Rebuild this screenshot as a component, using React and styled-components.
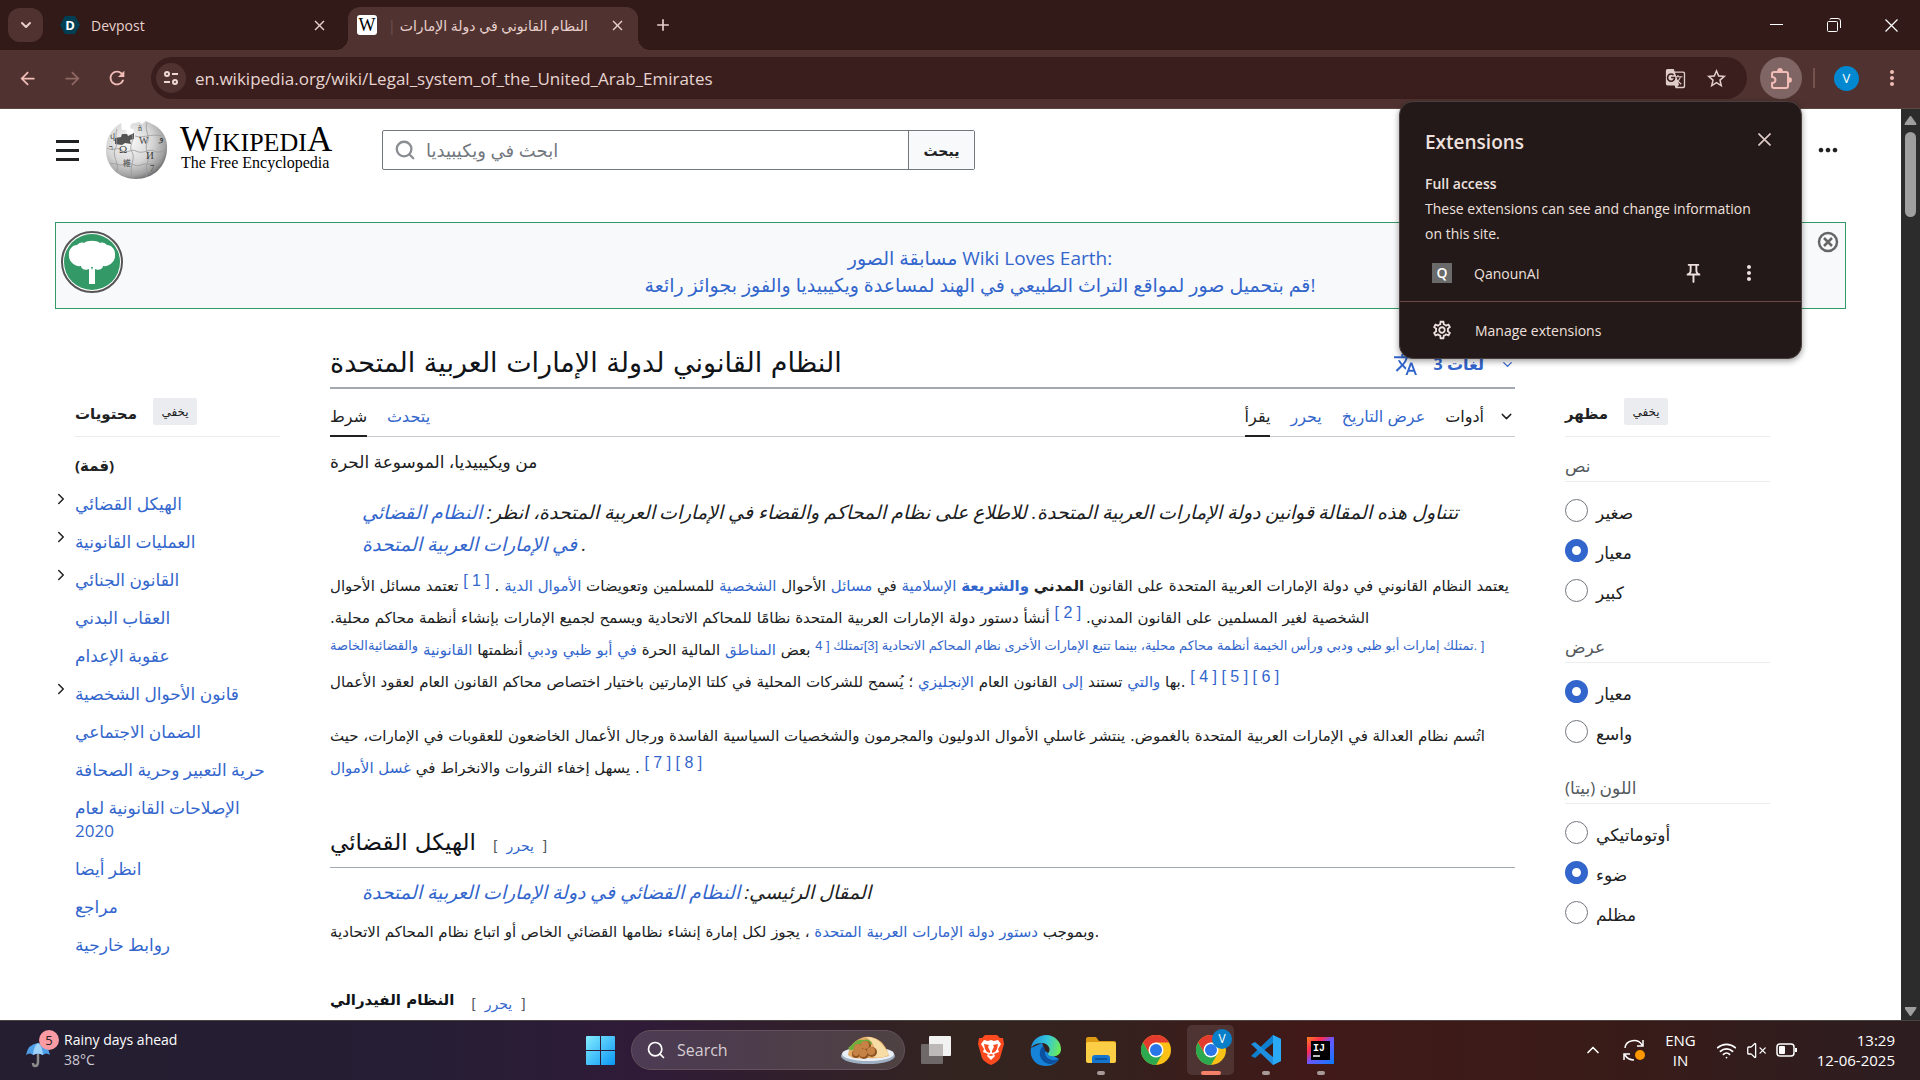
import React, { useState } from 'react';
import styled, { createGlobalStyle, css } from 'styled-components';
import {
  MdArrowBack,
  MdArrowForward,
  MdRefresh,
  MdStarBorder,
  MdGTranslate,
  MdMoreVert,
  MdMoreHoriz,
  MdOutlinePushPin,
  MdOutlineSettings,
  MdTranslate,
  MdClose,
  MdAdd,
} from 'react-icons/md';
import { ChevronDown, ChevronRight, ChevronUp, Search, VolumeX, Wifi } from 'lucide-react';

const ui = '"Open Sans", "DejaVu Sans", sans-serif';
const article = '"DejaVu Sans", "Liberation Sans", sans-serif';
const serif = '"Liberation Serif", "DejaVu Serif", serif';

const GlobalStyle = createGlobalStyle`
  * {
    box-sizing: border-box;
  }

  body {
    margin: 0;
    overflow: hidden;
    font-family: ${ui};
    font-size: 15px;
    color: #202122;
  }

  button {
    font: inherit;
    color: inherit;
    padding: 0;
    border: none;
    background: none;
  }

  a {
    color: #3366cc;
    text-decoration: none;
  }
`;

const Screen = styled.div`
  height: 100vh;
  display: flex;
  flex-direction: column;
  background-color: #fff;
`;

/* ---------- browser ---------- */

const TabStrip = styled.div`
  height: 50px;
  flex-shrink: 0;
  display: flex;
  align-items: center;
  padding: 0 12px 0 8px;
  background-color: #311a18;
  color: #e7cfcb;
`;

const TabSearchButton = styled.button`
  width: 35px;
  height: 34px;
  display: flex;
  align-items: center;
  justify-content: center;
  border-radius: 12px;
  background-color: #503331;
`;

const Tab = styled.div`
  position: relative;
  width: 290px;
  height: 43px;
  align-self: flex-end;
  display: flex;
  align-items: center;
  gap: 11px;
  margin-right: 15px;
  padding: 0 11px 7px 9px;
  border-radius: 12px 12px 0 0;
  font-size: 14px;
  white-space: nowrap;

  ${({ $active }) =>
    $active
      ? css`
          background-color: #503331;

          &::before,
          &::after {
            content: '';
            position: absolute;
            bottom: 0;
            width: 12px;
            height: 12px;
          }

          &::before {
            right: 100%;
            background: radial-gradient(circle at 0 0, transparent 12px, #503331 12px);
          }

          &::after {
            left: 100%;
            background: radial-gradient(circle at 100% 0, transparent 12px, #503331 12px);
          }
        `
      : css`
          padding-left: 17px;
          padding-right: 4px;
        `}
`;

const TabTitle = styled.span`
  flex: 1;
`;

const TitleBar = styled.span`
  margin-right: 4px;
  opacity: 0.2;
`;

const IconButton = styled.button`
  width: ${({ $size = 20 }) => $size}px;
  height: ${({ $size = 20 }) => $size}px;
  flex-shrink: 0;
  display: flex;
  align-items: center;
  justify-content: center;
  border-radius: 50%;
  background-color: ${({ $bg = 'transparent' }) => $bg};
  color: ${({ $color = 'inherit' }) => $color};
`;

const WikiFavicon = styled.span`
  width: 20px;
  height: 20px;
  flex-shrink: 0;
  display: flex;
  align-items: center;
  justify-content: center;
  border-radius: 3px;
  background-color: #fff;
  color: #000;
  font-family: ${serif};
  font-size: 18px;
`;

const WindowControls = styled.div`
  display: flex;
  gap: 37px;
  margin-left: auto;
  padding-right: 7px;
  color: #fff;
`;

const Toolbar = styled.div`
  position: relative;
  height: 59px;
  flex-shrink: 0;
  display: flex;
  align-items: center;
  gap: 13px;
  padding: 0 12px 2px 11px;
  background-color: #503331;
  border-bottom: 1px solid #5e4643;
  color: #f2bdb6;
`;

const NavGroup = styled.div`
  display: flex;
  gap: 13px;
  margin-right: 5px;
`;

const Omnibox = styled.div`
  flex: 1;
  height: 42px;
  display: flex;
  align-items: center;
  gap: 9px;
  padding: 0 15px 0 5px;
  border-radius: 21px;
  background-color: #3a1e1d;
  color: #e0ccc9;
`;

const UrlInput = styled.input`
  flex: 1;
  min-width: 0;
  padding: 0;
  border: none;
  outline: none;
  background: none;
  color: #e6d4d1;
  font-family: ${ui};
  font-size: 17px;
`;

const ToolbarDivider = styled.span`
  width: 2px;
  height: 20px;
  margin: 0 6px 0 -2px;
  background-color: #74514d;
`;

const Avatar = styled.button`
  width: 25px;
  height: 25px;
  margin-right: 4px;
  border-radius: 50%;
  background-color: #0288d1;
  color: #fff;
  font-size: 13px;
`;

/* ---------- extensions popup ---------- */

const Popup = styled.section`
  position: absolute;
  top: 51px;
  right: 118px;
  z-index: 10;
  width: 403px;
  border: 1px solid #4a3f3e;
  border-radius: 14px;
  background-color: #231918;
  box-shadow: 0 2px 6px rgba(0, 0, 0, 0.4);
  color: #eee0de;
`;

const PopupBody = styled.div`
  padding: 25px 25px 13px;
  line-height: 25px;
`;

const PopupTitle = styled.h2`
  display: flex;
  align-items: flex-start;
  justify-content: space-between;
  margin: 0 0 14px;
  font-size: 19px;
  line-height: 30px;
  font-weight: 600;
`;

const PopupHeading = styled.h3`
  margin: 0;
  font-size: 14px;
  font-weight: 600;
`;

const PopupText = styled.p`
  margin: 0 0 12px;
  font-size: 14px;
`;

const PopupRow = styled.div`
  display: flex;
  align-items: center;
  gap: 22px;
  height: ${({ $height = 30 }) => $height}px;
  padding: ${({ $inset = 7 }) => `0 5px 0 ${$inset}px`};
  font-size: 14px;

  > span:nth-of-type(1) {
    flex: 1;
  }
`;

const PopupFooter = styled.div`
  border-top: 1px solid #6b4a46;
`;

const LetterIcon = styled.i`
  width: 20px;
  height: 20px;
  background-color: #6a6a6a;
  color: #fff;
  font-style: normal;
  font-weight: 600;
  font-size: 14px;
  line-height: 20px;
  text-align: center;
`;

/* ---------- page ---------- */

const Viewport = styled.div`
  flex: 1;
  min-height: 0;
  display: flex;
`;

const Page = styled.div`
  flex: 1;
  min-width: 0;
  overflow: hidden;
  padding: 0 55px;
`;

const Scrollbar = styled.div`
  width: 19px;
  display: flex;
  flex-direction: column;
  align-items: center;
  justify-content: space-between;
  padding: 6px 0 3px;
  background-color: #2c2c2c;
`;

const Thumb = styled.div`
  width: 11px;
  height: 85px;
  margin: 6px 0 auto;
  border-radius: 6px;
  background-color: #9f9f9f;
`;

const SiteHeader = styled.header`
  height: 113px;
  display: flex;
  align-items: flex-start;
  padding: 12px 4px 0 1px;
`;

const MenuButton = styled.button`
  width: 23px;
  height: 59px;
  display: flex;
  flex-direction: column;
  justify-content: center;
  gap: 6px;
  margin-right: 26px;

  span {
    height: 3px;
    background-color: #202122;
  }
`;

const Brand = styled.a`
  display: flex;
  gap: 12px;
  width: 277px;
  color: #000;
  font-family: ${serif};
`;

const Wordmark = styled.span`
  display: block;
  height: 31px;
  font-size: 26px;
  line-height: 38px;

  b {
    font-size: 35px;
    font-weight: 400;
  }
`;

const Tagline = styled.span`
  display: block;
  padding-left: 1px;
  font-size: 16px;
  line-height: 22px;
`;

const SearchForm = styled.form`
  width: 593px;
  height: 40px;
  display: flex;
  margin-top: 9px;
  border: 1px solid #72777d;
  border-radius: 2px;
`;

const SearchField = styled.label`
  flex: 1;
  display: flex;
  align-items: center;
  gap: 8px;
  padding-left: 11px;
  color: #8a8d91;

  input {
    flex: 1;
    min-width: 0;
    height: 36px;
    border: none;
    outline: none;
    font-family: ${ui};
    font-size: 18px;
  }

  input::placeholder {
    color: #72777d;
  }
`;

const SearchButton = styled.button`
  width: 66px;
  border-left: 1px solid #72777d;
  background-color: #f8f9fa;
  font-size: 14px;
  font-weight: 700;
`;

const MoreButton = styled(IconButton)`
  margin: 15px 0 0 auto;
`;

const Banner = styled.aside`
  height: 87px;
  display: flex;
  align-items: flex-start;
  padding: 8px 6px 0 5px;
  border: 1px solid #339966;
  background-color: #f8f9fb;
  color: #666;
`;

const BannerLink = styled.a`
  flex: 1;
  display: flex;
  flex-direction: column;
  align-items: center;
  padding: 14px 0 0 20px;
  font-size: 19px;
  line-height: 27px;
`;

const Columns = styled.div`
  display: grid;
  grid-template-columns: 225px minmax(0, 1fr) 205px;
  column-gap: 50px;
  padding-right: 76px;
`;

const SideHead = styled.div`
  height: 42px;
  display: flex;
  align-items: flex-start;
  gap: 16px;
  border-bottom: 1px solid #eaecf0;

  h2 {
    margin: 0;
    padding-top: 5px;
    font-size: 15px;
    font-weight: 700;
    line-height: 26px;
  }

  button {
    width: 44px;
    height: 27px;
    margin-top: 3px;
    border-radius: 2px;
    background-color: #eaecf0;
    font-size: 12px;
  }
`;

const Contents = styled.nav`
  margin-top: 86px;
  padding-left: 20px;
`;

const ContentsList = styled.ul`
  margin: 17px 0 0;
  padding: 0;
  list-style: none;
  line-height: 23px;
`;

const ContentsItem = styled.li`
  position: relative;
  margin-bottom: 15px;
  font-size: ${({ $bold }) => ($bold ? 15 : 17)}px;
  font-weight: ${({ $bold }) => ($bold ? 700 : 400)};

  a {
    display: block;
    color: ${({ $bold }) => ($bold ? '#202122' : '#3366cc')};
  }

  button {
    position: absolute;
    left: -23px;
    top: -2px;
    height: 18px;
  }
`;

const Year = styled.span`
  display: block;
`;

const Article = styled.main`
  min-width: 0;
`;

const TitleRow = styled.div`
  height: 52px;
  display: flex;
  justify-content: space-between;
  align-items: center;
  margin-top: 28px;
  border-bottom: 2px solid #a2a9b1;
`;

const Title = styled.h1`
  margin: 0;
  color: #101418;
  font-family: ${article};
  font-size: 27px;
  font-weight: 400;
  white-space: nowrap;
`;

const Languages = styled.button`
  display: flex;
  align-items: center;
  gap: 16px;
  padding-top: 4px;
  color: #3366cc;
  font-size: 16px;
  font-weight: 700;
`;

const PageTabs = styled.div`
  height: 48px;
  display: flex;
  gap: 20px;
  border-bottom: 1px solid #c8ccd1;
  font-size: 16px;
  line-height: 55px;
`;

const PageTab = styled.a`
  height: 48px;
  color: ${({ $plain }) => ($plain ? '#202122' : '#3366cc')};
  border-bottom: ${({ $selected }) => ($selected ? '2px solid #202122' : 'none')};
`;

const TabSpacer = styled.span`
  flex: 1;
`;

const ToolsButton = styled.button`
  height: 55px;
  display: flex;
  align-items: center;
  gap: 14px;
  line-height: inherit;
`;

const Lines = styled.div`
  display: flex;
  flex-direction: column;
  align-items: flex-start;
  margin-top: ${({ $gap }) => $gap}px;
  padding-left: ${({ $indent = 0 }) => $indent}px;
  font-family: ${({ $ui }) => ($ui ? ui : article)};
  font-size: ${({ $size = 15 }) => $size}px;
  font-style: ${({ $italic }) => ($italic ? 'italic' : 'normal')};
`;

const Line = styled.div.attrs({ dir: 'rtl' })`
  height: 32px;
  line-height: 32px;
  white-space: nowrap;
`;

const Ref = styled.sup`
  font-family: "Liberation Sans", "DejaVu Sans", sans-serif;
  font-size: ${({ $small }) => ($small ? 13 : 16)}px;
  line-height: 0;
  vertical-align: 5px;
`;

const Section = styled.div`
  height: ${({ $height }) => $height}px;
  display: flex;
  align-items: center;
  gap: 17px;
  margin-top: ${({ $gap }) => $gap}px;
  border-bottom: ${({ $rule }) => ($rule ? '1px solid #a2a9b1' : 'none')};
  font-family: ${article};

  h2,
  h3 {
    margin: 0;
    color: #101418;
    font-size: ${({ $size }) => $size}px;
    font-weight: ${({ $bold }) => ($bold ? 700 : 400)};
  }
`;

const Edit = styled.span`
  padding-top: 8px;
  color: #54595d;
  font-size: 14px;

  a {
    margin: 0 8px;
  }
`;

const Appearance = styled.aside`
  margin-top: 86px;
`;

const AppearanceGroups = styled.div`
  padding-top: 14px;
`;

const Options = styled.fieldset`
  margin: 0 0 22px;
  padding: 0;
  border: none;
  font-size: 17px;

  legend {
    width: 100%;
    height: 31px;
    padding: 0;
    border-bottom: 1px solid #eaecf0;
    color: #54595d;
    line-height: 29px;
  }
`;

const OptionList = styled.div`
  padding-top: 8px;
`;

const Option = styled.label`
  height: 40px;
  display: flex;
  align-items: center;
  gap: 8px;

  input {
    appearance: none;
    width: 23px;
    height: 23px;
    margin: 0;
    border: 1px solid #72777d;
    border-radius: 50%;
    background-color: #fff;
  }

  input:checked {
    border: 7px solid #3366cc;
  }

  span {
    padding-top: 4px;
  }
`;

/* ---------- taskbar ---------- */

const Taskbar = styled.footer`
  height: 60px;
  flex-shrink: 0;
  display: grid;
  grid-template-columns: 1fr auto 1fr;
  align-items: center;
  padding: 0 25px 1px 24px;
  border-top: 1px solid #4b4340;
  background: linear-gradient(90deg, #241e30 0%, #261e34 22%, #2f1b38 33%, #33241f 50%, #35211e 58%, #401918 68%, #3a1b17 82%, #2c1d21 100%);
  color: #fff;
  font-size: 14px;
  line-height: 20px;
`;

const Weather = styled.button`
  display: flex;
  align-items: center;
  gap: 4px;
  justify-self: start;
  text-align: left;

  small {
    display: block;
    color: #cfcbd3;
    font-size: 14px;
  }
`;

const Apps = styled.div`
  display: flex;
  align-items: center;
  margin-left: 14px;
`;

const StartButton = styled(IconButton)`
  margin-right: 16px;
  border-radius: 0;
`;

const TaskSearch = styled.label`
  width: 274px;
  height: 40px;
  display: flex;
  align-items: center;
  gap: 11px;
  margin-right: 3px;
  padding: 0 9px 0 14px;
  border: 1px solid #65505d;
  border-radius: 20px;
  background-color: rgba(255, 255, 255, 0.14);

  input {
    flex: 1;
    min-width: 0;
    padding: 0;
    border: none;
    outline: none;
    background: none;
    font-family: ${ui};
    font-size: 16px;
  }

  input::placeholder {
    color: #d5cdd4;
  }
`;

const AppButton = styled.button`
  position: relative;
  width: 47px;
  height: 50px;
  display: flex;
  align-items: center;
  justify-content: center;
  margin: 0 4px;
  border-radius: 5px;
  background-color: ${({ $active }) => ($active ? 'rgba(255, 255, 255, 0.1)' : 'transparent')};

  &::after {
    content: '';
    position: absolute;
    bottom: 0;
    width: ${({ $active }) => ($active ? 20 : 8)}px;
    height: 4px;
    border-radius: 2px;
    background-color: ${({ $active, $running }) => ($active ? '#f4806a' : $running ? '#a79a98' : 'transparent')};
  }
`;

const AppBadge = styled.span`
  position: absolute;
  top: 4px;
  right: 2px;
  width: 20px;
  height: 20px;
  border-radius: 50%;
  background-color: #0a7fc9;
  font-size: 12px;
`;

const Tray = styled.div`
  display: flex;
  align-items: center;
  justify-self: end;
  gap: 20px;
`;

const TrayText = styled.div`
  font-size: 15px;
  text-align: ${({ $align }) => $align};
`;

const TrayIcons = styled.div`
  display: flex;
  align-items: center;
  gap: 9px;
`;

/* ---------- drawings ---------- */

const Globe = () => (
  <svg width="63" height="58" viewBox="0 0 63 58" aria-hidden="true">
    <defs>
      <radialGradient id="globe" cx="38%" cy="35%" r="70%">
        <stop offset="0" stopColor="#fafafa" />
        <stop offset="0.55" stopColor="#d6d6d6" />
        <stop offset="0.85" stopColor="#a0a0a0" />
        <stop offset="1" stopColor="#666" />
      </radialGradient>
    </defs>
    <path
      d="M13 4 L16 2 L17 9 L21 9 L22 13 L28 13 L29 9 L25 7 L26 3 L34 1 L37 3 L41 0 L49 4 C58 9 63 18 62 29 C61 46 48 58 31 58 C14 58 1 46 1 29 C1 18 5 10 13 4 Z"
      fill="url(#globe)"
    />
    <path d="M10 17 l6 -1 1 -3 5 0 1 2 6 -3 0 6 -4 1 1 4 -6 -1 -3 2 -7 -1 z" fill="#555" />
    <g fill="none" stroke="#999" strokeWidth="0.8">
      <path d="M2 27 C8 31 12 25 16 29 C22 34 26 27 31 30 C38 34 44 27 49 30 C54 33 58 29 62 29" />
      <path d="M5 43 C10 41 14 46 20 43 C26 40 30 47 36 44 C42 41 49 46 57 41" />
      <path d="M12 8 C9 16 14 22 10 28 C7 36 14 40 12 51" />
      <path d="M27 13 C30 20 23 25 27 31 C31 38 24 42 27 57" />
      <path d="M42 2 C39 10 46 15 42 22 C39 29 46 35 42 43 C40 48 43 52 41 56" />
      <path d="M30 15 C38 18 45 12 57 15" />
    </g>
    <g fill="#444" fontFamily="Liberation Serif" fontSize="10">
      <text x="14" y="32" fontSize="11">Ω</text>
      <text x="34" y="23">W</text>
      <text x="41" y="38" fontSize="11">И</text>
      <text x="54" y="20">و</text>
      <text x="33" y="10" fontSize="8">ñ</text>
      <text x="4" y="29" fontSize="8">ר</text>
      <text x="18" y="45" fontFamily="Noto Sans CJK JP" fontSize="8">維</text>
      <text x="45" y="50" fontSize="9">7</text>
      <text x="5" y="18" fontSize="8">վ</text>
    </g>
  </svg>
);

const TreeLogo = () => (
  <svg width="62" height="62" viewBox="0 0 62 62" aria-hidden="true">
    <circle cx="31" cy="31" r="30" fill="#fff" stroke="#555" strokeWidth="2" />
    <circle cx="31" cy="31" r="28" fill="#339966" />
    <path
      d="M28 53 V38 C25 40 20 38 20 35 C14 36 8 31 8 25 C7 18 12 14 16 14 C18 12 20 11 23 12 C26 9 36 9 39 12 C42 11 44 12 46 14 C50 14 55 18 54 25 C54 31 48 36 42 35 C42 38 37 40 34 38 V53 Z"
      fill="#fff"
    />
    <path d="M30 36 h2 l-1 3 z" fill="#339966" />
  </svg>
);

const DevpostIcon = () => (
  <svg width="20" height="20" viewBox="0 0 20 20" aria-hidden="true">
    <path d="M5 1 H15 L20 10 L15 19 H5 L0 10 Z" fill="#003e54" />
    <text x="10" y="15" fill="#fff" fontFamily="Open Sans" fontSize="13" fontWeight="700" textAnchor="middle">D</text>
  </svg>
);

const SiteInfoIcon = () => (
  <svg width="18" height="18" viewBox="0 0 18 18" fill="none" stroke="#eed8d5" strokeWidth="2" aria-hidden="true">
    <circle cx="5" cy="5" r="2" />
    <path d="M10 5 H16 M2 13 H8" />
    <circle cx="13" cy="13" r="2" />
  </svg>
);

const PuzzleIcon = () => (
  <svg width="24" height="24" viewBox="0 0 24 24" aria-hidden="true">
    <path
      d="M5 6 H17 Q19 6 19 8 V20 Q19 22 17 22 H5 Q3 22 3 20 V17 A3.500 3 0 0 0 3 11 V8 Q3 6 5 6 Z"
      fill="none"
      stroke="currentColor"
      strokeWidth="2"
      strokeLinejoin="round"
    />
    <path d="M8 6 A3 4 0 0 1 14 6 Z M19 11 A4 3 0 0 1 19 17 Z" fill="currentColor" />
  </svg>
);

const RestoreIcon = () => (
  <svg width="14" height="14" viewBox="0 0 14 14" fill="none" stroke="#fff" aria-hidden="true">
    <rect x="0.5" y="3.5" width="10" height="10" rx="1" />
    <path d="M3 1.5 Q3 0.5 4 0.5 H11 Q13.500 0.5 13.500 3 V10" />
  </svg>
);

const WindowCloseIcon = ({ size = 13, width = 1.2, color = '#fff' }) => (
  <svg width={size} height={size} viewBox="0 0 13 13" fill="none" stroke={color} strokeWidth={width} aria-hidden="true">
    <path d="M0.500 0.500 L12.500 12.500 M12.500 0.500 L0.500 12.500" />
  </svg>
);

const MinimizeIcon = () => (
  <svg width="14" height="14" viewBox="0 0 14 14" stroke="#fff" aria-hidden="true">
    <path d="M0 6.500 H13" />
  </svg>
);

const CircleClose = () => (
  <svg width="22" height="22" viewBox="0 0 22 22" fill="none" stroke="#666" strokeWidth="2.500" aria-hidden="true">
    <circle cx="11" cy="11" r="9" />
    <path d="M7 7 L15 15 M15 7 L7 15" />
  </svg>
);

const ScrollArrow = ({ down }) => (
  <svg width="13" height="11" viewBox="0 0 13 11" aria-hidden="true">
    <path d={down ? 'M1 1 H12 Q13 1 12 3 L7 10 L6 10 L1 3 Z' : 'M6 1 L7 1 L12 8 Q13 10 12 10 H1 Q0 10 1 8 Z'} fill="#9f9f9f" />
  </svg>
);

const Umbrella = () => (
  <svg width="36" height="44" viewBox="0 0 36 44" aria-hidden="true">
    <path d="M14 24 V34 Q14 38 11 38 Q9 38 9 35" fill="none" stroke="#8b8b8b" strokeWidth="2.500" />
    <path d="M2 27 Q4 16 14 15 Q24 16 26 27 Q22 24 19 27 Q14 24 9 27 Q6 24 2 27 Z" fill="#4f9fe8" />
    <path d="M9 27 Q10 17 14 15 Q18 17 19 27 Q14 24 9 27 Z" fill="#9fd3fa" />
    <circle cx="25" cy="12" r="10" fill="#fb9ba3" />
    <text x="25" y="17" fill="#222" fontFamily="Open Sans" fontSize="13" textAnchor="middle">5</text>
  </svg>
);

const StartIcon = () => (
  <svg width="29" height="29" viewBox="0 0 29 29" aria-hidden="true">
    <defs>
      <linearGradient id="start" x1="0" y1="0" x2="1" y2="1">
        <stop offset="0" stopColor="#84edff" />
        <stop offset="1" stopColor="#0a96f5" />
      </linearGradient>
    </defs>
    <path d="M0 1 Q0 0 1 0 H14 V14 H0 Z M15 0 H28 Q29 0 29 1 V14 H15 Z M0 15 H14 V29 H1 Q0 29 0 28 Z M15 15 H29 V28 Q29 29 28 29 H15 Z" fill="url(#start)" />
  </svg>
);

const FoodIcon = () => (
  <svg width="54" height="28" viewBox="0 0 54 28" aria-hidden="true">
    <ellipse cx="27" cy="20" rx="27" ry="8" fill="#9fb0c2" />
    <ellipse cx="27" cy="18" rx="26" ry="7" fill="#e9eff5" />
    <path d="M7 19 Q9 5 23 1 Q42 -1 48 20 Q38 23 27 22 Q12 24 7 19 Z" fill="#e3ab66" />
    <path d="M25 1 Q39 0 48 19 Q40 23 32 21 Q37 9 25 1 Z" fill="#f8dca6" />
    <path d="M7 12 L12 8 Q16 3 22 4 Q28 2 31 7 Q30 11 24 11 Q18 14 13 13 Q10 16 7 12 Z" fill="#6fae3c" />
    <g fill="#8f5423">
      <circle cx="18" cy="13" r="5" />
      <circle cx="25" cy="10" r="5" />
      <circle cx="31" cy="16" r="5" />
      <circle cx="23" cy="18" r="5" />
      <circle cx="15" cy="18" r="4" />
    </g>
    <g fill="#c68345">
      <circle cx="17" cy="12" r="4" />
      <circle cx="24" cy="9" r="4" />
      <circle cx="30" cy="15" r="4" />
      <circle cx="22" cy="17" r="4" />
      <circle cx="15" cy="17" r="3" />
    </g>
  </svg>
);

const TaskViewIcon = () => (
  <svg width="30" height="28" viewBox="0 0 30 28" aria-hidden="true">
    <rect x="8" y="0" width="22" height="20" rx="1" fill="#f2f2f2" />
    <rect x="0" y="8" width="22" height="20" rx="1" fill="#6e6968" />
    <path d="M8 8 H22 V20 H8 Z" fill="#bdb9b8" />
  </svg>
);

const BraveIcon = () => (
  <svg width="26" height="30" viewBox="0 0 26 30" aria-hidden="true">
    <path d="M7 0 H19 L22 3 L25 3 L26 9 L22 23 Q20 27 13 30 Q6 27 4 23 L0 9 L1 3 L4 3 Z" fill="#fb4a1f" />
    <path d="M6 5 L10 6 L13 5 L16 6 L20 5 L23 9 L20 14 L21 17 L16 19 L17 21 L13 25 L9 21 L10 19 L5 17 L6 14 L3 9 Z" fill="#fff" />
    <path d="M6 9 L11 10 L10 12 L12 16 V18 L9 17 L7 14 Z M20 9 L15 10 L16 12 L14 16 V18 L17 17 L19 14 Z M10 20 L13 19 L16 20 L13 21 Z" fill="#fb4a1f" />
  </svg>
);

const EdgeIcon = () => (
  <svg width="31" height="31" viewBox="0 0 31 31" aria-hidden="true">
    <defs>
      <linearGradient id="edgeTop" x1="0" y1="0.300" x2="1" y2="0.500">
        <stop offset="0" stopColor="#1c8fe0" />
        <stop offset="0.500" stopColor="#34c5dc" />
        <stop offset="1" stopColor="#6cea5a" />
      </linearGradient>
    </defs>
    <path d="M1 13 C-1 23 6 31 16 31 C22 31 27 28 29 24 L15 16 L12 8 Z" fill="#1683d8" />
    <path d="M1 13 C2 5 9 0 16 0 C25 0 31 7 31 14 C31 19 27 22 22 21 C18 21 17 19 19 17 C21 14 18 8 12 8 C6 8 2 11 1 13 Z" fill="url(#edgeTop)" />
    <path d="M12 12 C7 18 11 29 21 29 C24 29 27 27 29 24 C23 27 14 24 15 16 C15 13 13 11 12 12 Z" fill="#0c50a0" />
  </svg>
);

const FolderIcon = () => (
  <svg width="30" height="27" viewBox="0 0 30 27" aria-hidden="true">
    <path d="M0 2 Q0 0 2 0 H10 L13 4 H28 Q30 4 30 6 V12 H0 Z" fill="#dc9a12" />
    <rect y="5" width="30" height="21" rx="2" fill="#fcce46" />
    <path d="M6 26 V21 Q6 18 9 18 H21 Q24 18 24 21 V26 Z" fill="#1475cf" />
    <path d="M9 22 H21" stroke="#0a4a8c" strokeWidth="1.500" />
  </svg>
);

const ChromeIcon = () => (
  <svg width="30" height="30" viewBox="0 0 30 30" aria-hidden="true">
    <circle cx="15" cy="15" r="15" fill="#fbc116" />
    <path d="M2 7.500 A15 15 0 0 1 28 7.500 H15 L8.500 18.750 Z" fill="#e33b2e" />
    <path d="M2 7.500 A15 15 0 0 0 15 30 L21.500 18.750 L8.500 18.750 Z" fill="#2da94f" />
    <circle cx="15" cy="15" r="7.500" fill="#fff" />
    <circle cx="15" cy="15" r="6" fill="#2a75e8" />
  </svg>
);

const VsCodeIcon = () => (
  <svg width="30" height="30" viewBox="0 0 30 30" aria-hidden="true">
    <path d="M22 0 L30 4 V26 L22 30 L22 22 L22 8 L4 23 L0 21 Z" fill="#0f7fd0" />
    <path d="M0 9 L4 7 L22 22 V30 Z" fill="#1f8fe0" />
    <path d="M22 0 L30 4 V26 L22 30 Z" fill="#2aa9f4" />
  </svg>
);

const IntellijIcon = () => (
  <svg width="27" height="27" viewBox="0 0 27 27" aria-hidden="true">
    <defs>
      <linearGradient id="ij" x1="0" y1="0" x2="1" y2="1">
        <stop offset="0" stopColor="#fc801d" />
        <stop offset="0.300" stopColor="#fe2857" />
        <stop offset="0.500" stopColor="#6b57ff" />
        <stop offset="1" stopColor="#087cfa" />
      </linearGradient>
    </defs>
    <rect width="27" height="27" fill="url(#ij)" />
    <rect x="4" y="4" width="19" height="19" fill="#000" />
    <text x="6" y="14" fill="#fff" fontFamily="Liberation Mono" fontSize="10" fontWeight="700">IJ</text>
    <path d="M6 19 H13" stroke="#fff" strokeWidth="1.500" />
  </svg>
);

const SyncIcon = () => (
  <svg width="22" height="22" viewBox="0 0 22 22" fill="none" stroke="#fff" strokeWidth="1.500" aria-hidden="true">
    <path d="M2 9 A9 8 0 0 1 19 6 M20 1 V7 H14 M1 21 V15 H7 M2 16 Q5 21 11 21" />
    <circle cx="17" cy="16" r="5" fill="#ff9800" stroke="none" />
  </svg>
);

const BatteryIcon = () => (
  <svg width="21" height="14" viewBox="0 0 21 14" aria-hidden="true">
    <rect x="1" y="1" width="17" height="12" rx="3" fill="none" stroke="#fff" strokeWidth="1.500" />
    <rect x="3" y="3" width="6" height="8" rx="1" fill="#fff" />
    <path d="M20 5 V9" stroke="#fff" strokeWidth="2" />
  </svg>
);

/* ---------- data ---------- */

const contents = [
  { text: '(قمة)', bold: true },
  { text: 'الهيكل القضائي', open: true },
  { text: 'العمليات القانونية', open: true },
  { text: 'القانون الجنائي', open: true },
  { text: 'العقاب البدني' },
  { text: 'عقوبة الإعدام' },
  { text: 'قانون الأحوال الشخصية', open: true },
  { text: 'الضمان الاجتماعي' },
  { text: 'حرية التعبير وحرية الصحافة' },
  { text: 'الإصلاحات القانونية لعام', year: '2020' },
  { text: 'انظر أيضا' },
  { text: 'مراجع' },
  { text: 'روابط خارجية' },
];

const settings = [
  { name: 'text', legend: 'نص', options: ['صغير', 'معيار', 'كبير'], initial: 'معيار' },
  { name: 'width', legend: 'عرض', options: ['معيار', 'واسع'], initial: 'معيار' },
  { name: 'color', legend: 'اللون (بيتا)', options: ['أوتوماتيكي', 'ضوء', 'مظلم'], initial: 'ضوء' },
];

function SettingGroup({ name, legend, options, initial }) {
  const [value, setValue] = useState(initial);

  return (
    <Options>
      <legend>{legend}</legend>
      <OptionList>
        {options.map((option) => (
          <Option key={option}>
            <input type="radio" name={name} checked={value === option} onChange={() => setValue(option)} />
            <span>{option}</span>
          </Option>
        ))}
      </OptionList>
    </Options>
  );
}

function ExtensionsPopup() {
  return (
    <Popup>
      <PopupBody>
        <PopupTitle>
          Extensions
          <IconButton aria-label="Close" $size={24}>
            <WindowCloseIcon width={1.6} color="#e0ccc9" />
          </IconButton>
        </PopupTitle>
        <PopupHeading>Full access</PopupHeading>
        <PopupText>
          These extensions can see and change information
          <br />
          on this site.
        </PopupText>
        <PopupRow>
          <LetterIcon>Q</LetterIcon>
          <span>QanounAI</span>
          <IconButton aria-label="Pin" $size={24}>
            <MdOutlinePushPin size={23} />
          </IconButton>
          <IconButton aria-label="More options" $size={44}>
            <MdMoreVert size={24} />
          </IconButton>
        </PopupRow>
      </PopupBody>
      <PopupFooter>
        <PopupRow $height={56} $inset={31}>
          <MdOutlineSettings size={22} />
          <span>Manage extensions</span>
        </PopupRow>
      </PopupFooter>
    </Popup>
  );
}

function BrowserChrome() {
  return (
    <>
      <TabStrip>
        <TabSearchButton aria-label="Search tabs">
          <ChevronDown size={16} strokeWidth={3} />
        </TabSearchButton>
        <Tab>
          <DevpostIcon />
          <TabTitle>Devpost</TabTitle>
          <IconButton aria-label="Close tab">
            <MdClose size={17} />
          </IconButton>
        </Tab>
        <Tab $active>
          <WikiFavicon>W</WikiFavicon>
          <TabTitle>
            <TitleBar>|</TitleBar>
            النظام القانوني في دولة الإمارات
          </TabTitle>
          <IconButton aria-label="Close tab">
            <MdClose size={17} />
          </IconButton>
        </Tab>
        <IconButton aria-label="New tab">
          <MdAdd size={20} />
        </IconButton>
        <WindowControls>
          <IconButton aria-label="Minimize">
            <MinimizeIcon />
          </IconButton>
          <IconButton aria-label="Restore">
            <RestoreIcon />
          </IconButton>
          <IconButton aria-label="Close window">
            <WindowCloseIcon />
          </IconButton>
        </WindowControls>
      </TabStrip>
      <Toolbar>
        <NavGroup>
          <IconButton $size={32} aria-label="Back">
            <MdArrowBack size={21} />
          </IconButton>
          <IconButton $size={32} $color="#8f6763" aria-label="Forward">
            <MdArrowForward size={21} />
          </IconButton>
          <IconButton $size={32} aria-label="Reload">
            <MdRefresh size={22} />
          </IconButton>
        </NavGroup>
        <Omnibox>
          <IconButton $size={30} $bg="#503331" aria-label="Site information">
            <SiteInfoIcon />
          </IconButton>
          <UrlInput aria-label="Address" defaultValue="en.wikipedia.org/wiki/Legal_system_of_the_United_Arab_Emirates" />
          <IconButton $size={32} aria-label="Translate">
            <MdGTranslate size={21} />
          </IconButton>
          <IconButton $size={32} aria-label="Bookmark">
            <MdStarBorder size={23} />
          </IconButton>
        </Omnibox>
        <IconButton $size={42} $bg="#7f6664" aria-label="Extensions">
          <PuzzleIcon />
        </IconButton>
        <ToolbarDivider />
        <Avatar>V</Avatar>
        <IconButton $size={32} aria-label="Menu">
          <MdMoreVert size={24} />
        </IconButton>
        <ExtensionsPopup />
      </Toolbar>
    </>
  );
}

function WikiHeader() {
  return (
    <>
      <SiteHeader>
        <MenuButton aria-label="القائمة">
          <span />
          <span />
          <span />
        </MenuButton>
        <Brand href="#">
          <Globe />
          <span>
            <Wordmark>
              <b>W</b>IKIPEDI<b>A</b>
            </Wordmark>
            <Tagline>The Free Encyclopedia</Tagline>
          </span>
        </Brand>
        <SearchForm onSubmit={(e) => e.preventDefault()}>
          <SearchField>
            <Search size={22} strokeWidth={2.5} />
            <input type="text" placeholder="ابحث في ويكيبيديا" />
          </SearchField>
          <SearchButton>يبحث</SearchButton>
        </SearchForm>
        <MoreButton $size={28} aria-label="المزيد">
          <MdMoreHoriz size={32} />
        </MoreButton>
      </SiteHeader>
      <Banner>
        <TreeLogo />
        <BannerLink href="#">
          <span>مسابقة الصور Wiki Loves Earth:</span>
          <span>قم بتحميل صور لمواقع التراث الطبيعي في الهند لمساعدة ويكيبيديا والفوز بجوائز رائعة!</span>
        </BannerLink>
        <IconButton $size={22} aria-label="إغلاق">
          <CircleClose />
        </IconButton>
      </Banner>
    </>
  );
}

function ArticleBody() {
  return (
    <Article>
      <TitleRow>
        <Title>النظام القانوني لدولة الإمارات العربية المتحدة</Title>
        <Languages>
          <MdTranslate size={25} />
          <span>3 لغات</span>
          <ChevronDown size={15} />
        </Languages>
      </TitleRow>
      <PageTabs>
        <PageTab href="#" $plain $selected>شرط</PageTab>
        <PageTab href="#">يتحدث</PageTab>
        <TabSpacer />
        <PageTab href="#" $plain $selected>يقرأ</PageTab>
        <PageTab href="#">يحرر</PageTab>
        <PageTab href="#">عرض التاريخ</PageTab>
        <ToolsButton>
          أدوات
          <ChevronDown size={17} />
        </ToolsButton>
      </PageTabs>
      <Lines $gap={9} $ui $size={17}>
        <Line>من ويكيبيديا، الموسوعة الحرة</Line>
      </Lines>
      <Lines $gap={18} $indent={32} $ui $italic $size={19}>
        <Line>
          تتناول هذه المقالة قوانين دولة الإمارات العربية المتحدة. للاطلاع على نظام المحاكم والقضاء في الإمارات العربية المتحدة، انظر: <a href="#">النظام القضائي</a>
        </Line>
        <Line>
          . <a href="#">في الإمارات العربية المتحدة</a>
        </Line>
      </Lines>
      <Lines $gap={10}>
        <Line>
          يعتمد النظام القانوني في دولة الإمارات العربية المتحدة على القانون <b>المدني</b> <a href="#"><b>والشريعة</b></a> <a href="#">الإسلامية</a> في <a href="#">مسائل</a> الأحوال <a href="#">الشخصية</a> للمسلمين وتعويضات <a href="#">الأموال الدية</a> . <Ref><a href="#">[ 1 ]</a></Ref> تعتمد مسائل الأحوال
        </Line>
        <Line>
          الشخصية لغير المسلمين على القانون المدني. <Ref><a href="#">[ 2 ]</a></Ref> أنشأ دستور دولة الإمارات العربية المتحدة نظامًا للمحاكم الاتحادية ويسمح لجميع الإمارات بإنشاء أنظمة محاكم محلية.
        </Line>
        <Line>
          <Ref $small><a href="#">[ .تمتلك إمارات أبو ظبي ودبي ورأس الخيمة أنظمة محاكم محلية، بينما تتبع الإمارات الأخرى نظام المحاكم الاتحادية [3]تمتلك [ 4</a></Ref> بعض <a href="#">المناطق</a> المالية الحرة <a href="#">في أبو ظبي ودبي</a> أنظمتها <a href="#">القانونية</a> <Ref $small><a href="#">والقضائيةالخاصة</a></Ref>
        </Line>
        <Line>
          <Ref><a href="#" dir="ltr">[ 4 ] [ 5 ] [ 6 ]</a></Ref> .بها <a href="#">والتي</a> تستند <a href="#">إلى</a> القانون العام <a href="#">الإنجليزي</a> ؛ يُسمح للشركات المحلية في كلتا الإمارتين باختيار اختصاص محاكم القانون العام لعقود الأعمال
        </Line>
      </Lines>
      <Lines $gap={22}>
        <Line>
          اتُسم نظام العدالة في الإمارات العربية المتحدة بالغموض. ينتشر غاسلي الأموال الدوليون والمجرمون والشخصيات السياسية الفاسدة ورجال الأعمال الخاضعون للعقوبات في الإمارات، حيث
        </Line>
        <Line>
          <Ref><a href="#" dir="ltr">[ 7 ] [ 8 ]</a></Ref> . يسهل إخفاء الثروات والانخراط في <a href="#">غسل الأموال</a>
        </Line>
      </Lines>
      <Section $height={52} $gap={32} $size={23} $rule>
        <h2>الهيكل القضائي</h2>
        <Edit>[<a href="#">يحرر</a>]</Edit>
      </Section>
      <Lines $gap={8} $indent={32} $ui $italic $size={19}>
        <Line>
          المقال الرئيسي: <a href="#">النظام القضائي في دولة الإمارات العربية المتحدة</a>
        </Line>
      </Lines>
      <Lines $gap={8}>
        <Line>
          .وبموجب <a href="#">دستور دولة الإمارات العربية المتحدة</a> ، يجوز لكل إمارة إنشاء نظامها القضائي الخاص أو اتباع نظام المحاكم الاتحادية
        </Line>
      </Lines>
      <Section $height={36} $gap={34} $size={15} $bold>
        <h3>النظام الفيدرالي</h3>
        <Edit>[<a href="#">يحرر</a>]</Edit>
      </Section>
    </Article>
  );
}

function WikiPage() {
  return (
    <Viewport>
      <Page>
        <WikiHeader />
        <Columns>
          <Contents>
            <SideHead>
              <h2>محتويات</h2>
              <button>يخفي</button>
            </SideHead>
            <ContentsList>
              {contents.map((item) => (
                <ContentsItem key={item.text} $bold={item.bold}>
                  {item.open && (
                    <button aria-label="توسيع">
                      <ChevronRight size={18} />
                    </button>
                  )}
                  <a href="#">
                    {item.text}
                    {item.year && <Year>{item.year}</Year>}
                  </a>
                </ContentsItem>
              ))}
            </ContentsList>
          </Contents>
          <ArticleBody />
          <Appearance>
            <SideHead>
              <h2>مظهر</h2>
              <button>يخفي</button>
            </SideHead>
            <AppearanceGroups>
              {settings.map((group) => (
                <SettingGroup key={group.name} {...group} />
              ))}
            </AppearanceGroups>
          </Appearance>
        </Columns>
      </Page>
      <Scrollbar>
        <ScrollArrow />
        <Thumb />
        <ScrollArrow down />
      </Scrollbar>
    </Viewport>
  );
}

function WindowsTaskbar() {
  return (
    <Taskbar>
      <Weather>
        <Umbrella />
        <span>
          Rainy days ahead
          <small>38°C</small>
        </span>
      </Weather>
      <Apps>
        <StartButton $size={30} aria-label="Start">
          <StartIcon />
        </StartButton>
        <TaskSearch>
          <Search size={20} />
          <input type="text" placeholder="Search" />
          <FoodIcon />
        </TaskSearch>
        <AppButton aria-label="Task view"><TaskViewIcon /></AppButton>
        <AppButton aria-label="Brave"><BraveIcon /></AppButton>
        <AppButton aria-label="Edge"><EdgeIcon /></AppButton>
        <AppButton aria-label="File Explorer" $running><FolderIcon /></AppButton>
        <AppButton aria-label="Chrome"><ChromeIcon /></AppButton>
        <AppButton aria-label="Chrome profile" $active>
          <ChromeIcon />
          <AppBadge>V</AppBadge>
        </AppButton>
        <AppButton aria-label="Visual Studio Code" $running><VsCodeIcon /></AppButton>
        <AppButton aria-label="IntelliJ IDEA" $running><IntellijIcon /></AppButton>
      </Apps>
      <Tray>
        <ChevronUp size={20} />
        <SyncIcon />
        <TrayText $align="center">
          ENG
          <br />
          IN
        </TrayText>
        <TrayIcons>
          <Wifi size={21} />
          <VolumeX size={21} strokeWidth={1.5} />
          <BatteryIcon />
        </TrayIcons>
        <TrayText $align="right">
          13:29
          <br />
          12-06-2025
        </TrayText>
      </Tray>
    </Taskbar>
  );
}

export default function App() {
  return (
    <Screen>
      <GlobalStyle />
      <BrowserChrome />
      <WikiPage />
      <WindowsTaskbar />
    </Screen>
  );
}
